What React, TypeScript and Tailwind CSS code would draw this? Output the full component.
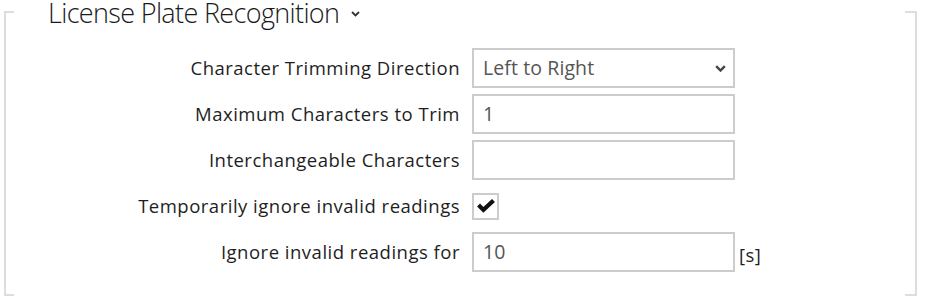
import React from "react";

const font = { fontFamily: '"Open Sans", "Noto Sans", sans-serif' };

function Row({ label, children }: { label: string; children: React.ReactNode }) {
  return (
    <div className="flex h-[40px] items-center">
      <div className="w-[466px] pr-[12px] text-right text-[18.5px] tracking-[0.5px] text-[#1e1e1e]">{label}</div>
      {children}
    </div>
  );
}

function TextBox({ value }: { value: string }) {
  return (
    <div className="flex h-[40px] w-[263px] items-center border-2 border-[#cccccc] bg-white px-[9px] text-[19.5px] tracking-[0.1px] text-[#555555]">
      {value}
    </div>
  );
}

export default function App() {
  return (
    <div className="h-[308px] w-[925px] bg-white pl-[4px] pr-[8px] pt-[11px]" style={font}>
      <div className="relative flex h-[285px] flex-col border-x-2 border-[#dddddd]">
        <div className="absolute left-0 top-0 h-[2px] w-[8px] bg-[#dddddd]" />
        <div className="absolute bottom-0 left-0 h-[2px] w-[8px] bg-[#dddddd]" />
        <div className="absolute right-0 top-0 h-[2px] w-[10px] bg-[#dddddd]" />
        <div className="absolute bottom-0 right-0 h-[2px] w-[10px] bg-[#dddddd]" />

        <div className="-mt-[11px] flex h-[48px] shrink-0 items-start pl-[42px]">
          <span className="bg-white pr-[2px] text-[27px] leading-[26px] font-light tracking-[-0.65px] text-[#1a1a1a]">
            License Plate Recognition
          </span>
          <svg className="ml-[10px] mt-[11px]" width="9" height="6" viewBox="0 0 9 6">
            <path d="M1 1 L4.5 4.5 L8 1" fill="none" stroke="#333" strokeWidth="1.8" />
          </svg>
        </div>

        <div className="flex flex-col gap-[6px]">
          <Row label="Character Trimming Direction">
            <div className="flex h-[40px] w-[263px] items-center justify-between border-2 border-[#cccccc] bg-white pl-[9px] pr-[7px] text-[19.5px] tracking-[0.1px] text-[#555555]">
              <span>Left to Right</span>
              <svg width="11" height="7" viewBox="0 0 11 7">
                <path d="M1.2 1.2 L5.5 5.5 L9.8 1.2" fill="none" stroke="#444" strokeWidth="2.4" />
              </svg>
            </div>
          </Row>
          <Row label="Maximum Characters to Trim">
            <TextBox value="1" />
          </Row>
          <Row label="Interchangeable Characters">
            <TextBox value="" />
          </Row>
          <Row label="Temporarily ignore invalid readings">
            <div className="flex h-[27px] w-[27px] items-center justify-center border-2 border-[#cccccc] bg-white">
              <svg width="20" height="16" viewBox="0 0 19 15">
                <path d="M1 8 L3.8 5.2 L7 8.4 L15.2 0.8 L18 3.6 L7 14 Z" fill="#111" />
              </svg>
            </div>
          </Row>
          <Row label="Ignore invalid readings for">
            <TextBox value="10" />
            <span className="ml-[4px] mt-[6px] text-[18.5px] tracking-[0.5px] text-[#1e1e1e]">[s]</span>
          </Row>
        </div>
      </div>
    </div>
  );
}
